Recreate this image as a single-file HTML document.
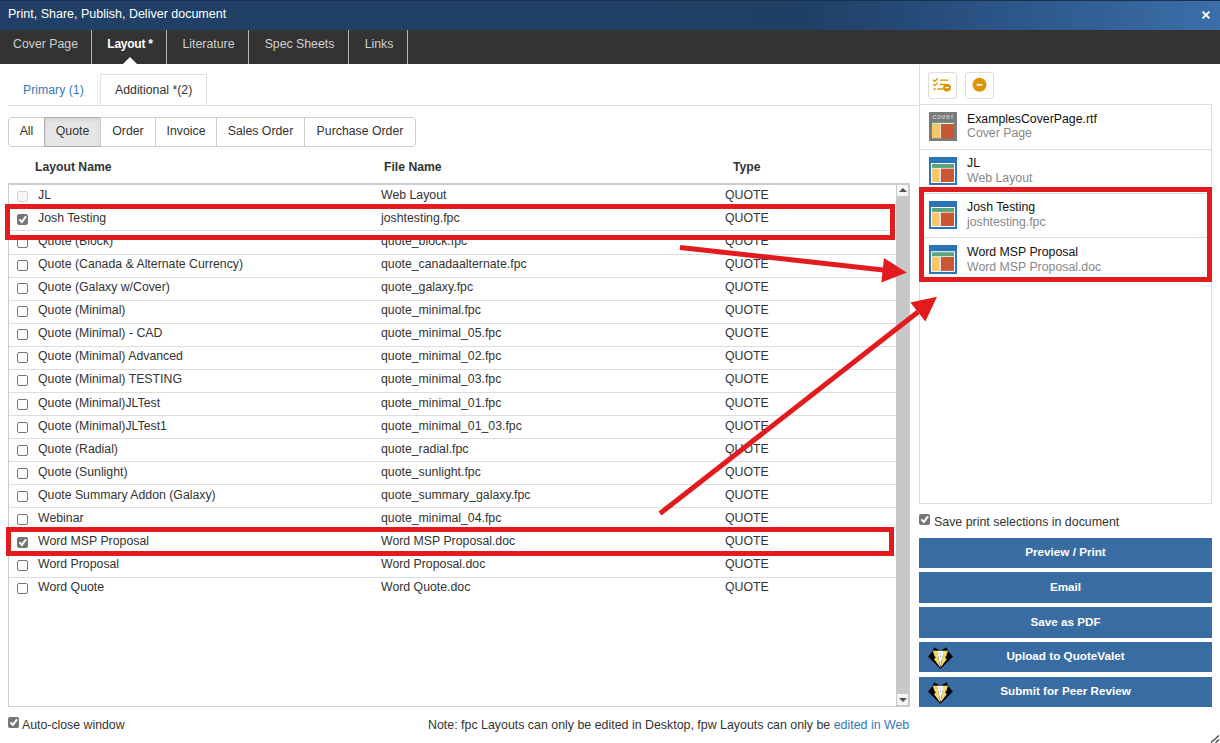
<!DOCTYPE html>
<html><head><meta charset="utf-8">
<style>
*{box-sizing:border-box;margin:0;padding:0}
html,body{width:1220px;height:743px;overflow:hidden;background:#fff;font-family:"Liberation Sans",sans-serif;color:#333;font-size:12.3px}
.a{position:absolute;white-space:nowrap}
#hdr{position:absolute;left:0;top:0;width:1220px;height:30px;background:linear-gradient(to right,#214067 0%,#1f3f65 66%,#2a5283 80%,#3b6fa9 100%);border-top:1px solid #173150}
#hdr .t{position:absolute;left:8px;top:6px;color:#fff;font-size:12.5px}
#tabs{position:absolute;left:0;top:30px;width:1220px;height:34px;background:#333}
.tab{position:absolute;top:0;height:33px;line-height:29px;color:#d0d0d0;font-size:12.3px;text-align:center;padding-left:2px}
.sep{position:absolute;top:0;width:1px;height:34px;background:#b4b4b4}
.notch{position:absolute;left:123px;top:27px;width:0;height:0;border-left:7px solid transparent;border-right:7px solid transparent;border-bottom:7px solid #fff}
.fb{position:absolute;top:117px;height:30px;border:1px solid #ccc;line-height:27px;text-align:center;font-size:12.3px;color:#333;background:#fff}
.row{position:absolute;left:9px;width:887px;height:23px}
.hl{position:absolute;left:9px;width:887px;height:1px;background:#ddd}
.row span{position:absolute;top:3px;font-size:12.3px;color:#333}
.cb{position:absolute;left:8px;top:6px;width:11px;height:11px;border:1px solid #767676;border-radius:2px;background:#fff}
.cbd{border-color:#d3d3d3;background:#f6f6f6}
.cbc{background:#767676;border-color:#767676}
.cbc svg{position:absolute;left:-1px;top:-1px}
.li{position:absolute;left:920px;width:291px;height:45px;border-bottom:1px solid #ddd}
.li .t1{position:absolute;left:47px;top:7px;font-size:12.3px;color:#111}
.li .t2{position:absolute;left:47px;top:22px;font-size:12.3px;color:#888}
.btn{position:absolute;left:919px;width:293px;height:30px;background:#3a6ca4;color:#fff;font-weight:bold;font-size:11.7px;text-align:center;line-height:28px}
.red{position:absolute;border:5px solid #e21b1f}
</style></head>
<body>
<div id="hdr"><div class="t">Print, Share, Publish, Deliver document</div>
<svg class="a" style="left:1200.5px;top:9px" width="10" height="10" viewBox="0 0 10 10"><path d="M1.6 1.6L8.4 8.4M8.4 1.6L1.6 8.4" stroke="#fff" stroke-width="2"/></svg>
</div>
<div id="tabs">
  <div class="tab" style="left:0;width:91px;padding-left:0">Cover Page</div>
  <div class="sep" style="left:91px"></div>
  <div class="tab" style="left:92px;width:74px;color:#fff;font-weight:bold;font-size:12px;letter-spacing:-0.25px;line-height:28px;padding-left:2px">Layout *</div>
  <div class="sep" style="left:166px"></div>
  <div class="tab" style="left:167px;width:81px">Literature</div>
  <div class="sep" style="left:248px"></div>
  <div class="tab" style="left:249px;width:99px">Spec Sheets</div>
  <div class="sep" style="left:348px"></div>
  <div class="tab" style="left:349px;width:58px">Links</div>
  <div class="sep" style="left:407px"></div>
  <div class="notch"></div>
</div>

<!-- sub tabs -->
<div class="a" style="left:23px;top:83px;color:#337ab7;font-size:12.3px">Primary (1)</div>
<div class="a" style="left:97px;top:74px;width:1px;height:31px;background:#eee"></div>
<div class="a" style="left:100px;top:74px;width:107px;height:32px;border:1px solid #ddd;border-bottom:none;background:#fff"></div>
<div class="a" style="left:115px;top:83px;color:#333;font-size:12.3px">Additional *(2)</div>
<div class="a" style="left:8px;top:105px;width:911px;height:1px;background:#ddd"></div>

<!-- filter buttons -->
<div class="fb" style="left:8px;width:37px;border-radius:4px 0 0 4px">All</div>
<div class="fb" style="left:44px;width:57px;background:#e6e6e6;border-color:#adadad;box-shadow:inset 0 2px 4px rgba(0,0,0,.08)">Quote</div>
<div class="fb" style="left:100px;width:56px">Order</div>
<div class="fb" style="left:155px;width:62px">Invoice</div>
<div class="fb" style="left:216px;width:89px">Sales Order</div>
<div class="fb" style="left:304px;width:112px;border-radius:0 4px 4px 0">Purchase Order</div>

<!-- table header -->
<div class="a" style="left:35px;top:160px;font-weight:bold;font-size:12.2px;color:#333">Layout Name</div>
<div class="a" style="left:384px;top:160px;font-weight:bold;font-size:12.2px;color:#333">File Name</div>
<div class="a" style="left:733px;top:160px;font-weight:bold;font-size:12.2px;color:#333">Type</div>

<!-- table box -->
<div class="a" style="left:8px;top:183px;width:902px;height:524px;border:1px solid #ccc;border-top:2px solid #ccc"></div>


<div class="hl" style="top:207px"></div>
<div class="hl" style="top:230px"></div>
<div class="hl" style="top:254px"></div>
<div class="hl" style="top:277px"></div>
<div class="hl" style="top:300px"></div>
<div class="hl" style="top:323px"></div>
<div class="hl" style="top:346px"></div>
<div class="hl" style="top:369px"></div>
<div class="hl" style="top:392px"></div>
<div class="hl" style="top:415px"></div>
<div class="hl" style="top:438px"></div>
<div class="hl" style="top:461px"></div>
<div class="hl" style="top:484px"></div>
<div class="hl" style="top:507px"></div>
<div class="hl" style="top:530px"></div>
<div class="hl" style="top:553px"></div>
<div class="hl" style="top:577px"></div>
<div class="row" style="top:185px"><div class="cb cbd"></div><span style="left:29px">JL</span><span style="left:372px">Web Layout</span><span style="left:716px">QUOTE</span></div>
<div class="row" style="top:208px"><div class="cb cbc"><svg width="11" height="11" viewBox="0 0 11 11"><path d="M2.4 5.4L4.9 7.9L9 2.4" stroke="#fff" stroke-width="2" fill="none"/></svg></div><span style="left:29px">Josh Testing</span><span style="left:372px">joshtesting.fpc</span><span style="left:716px">QUOTE</span></div>
<div class="row" style="top:231px"><div class="cb"></div><span style="left:29px">Quote (Block)</span><span style="left:372px">quote_block.fpc</span><span style="left:716px">QUOTE</span></div>
<div class="row" style="top:254px"><div class="cb"></div><span style="left:29px">Quote (Canada &amp; Alternate Currency)</span><span style="left:372px">quote_canadaalternate.fpc</span><span style="left:716px">QUOTE</span></div>
<div class="row" style="top:277px"><div class="cb"></div><span style="left:29px">Quote (Galaxy w/Cover)</span><span style="left:372px">quote_galaxy.fpc</span><span style="left:716px">QUOTE</span></div>
<div class="row" style="top:300px"><div class="cb"></div><span style="left:29px">Quote (Minimal)</span><span style="left:372px">quote_minimal.fpc</span><span style="left:716px">QUOTE</span></div>
<div class="row" style="top:323px"><div class="cb"></div><span style="left:29px">Quote (Minimal) - CAD</span><span style="left:372px">quote_minimal_05.fpc</span><span style="left:716px">QUOTE</span></div>
<div class="row" style="top:346px"><div class="cb"></div><span style="left:29px">Quote (Minimal) Advanced</span><span style="left:372px">quote_minimal_02.fpc</span><span style="left:716px">QUOTE</span></div>
<div class="row" style="top:369px"><div class="cb"></div><span style="left:29px">Quote (Minimal) TESTING</span><span style="left:372px">quote_minimal_03.fpc</span><span style="left:716px">QUOTE</span></div>
<div class="row" style="top:393px"><div class="cb"></div><span style="left:29px">Quote (Minimal)JLTest</span><span style="left:372px">quote_minimal_01.fpc</span><span style="left:716px">QUOTE</span></div>
<div class="row" style="top:416px"><div class="cb"></div><span style="left:29px">Quote (Minimal)JLTest1</span><span style="left:372px">quote_minimal_01_03.fpc</span><span style="left:716px">QUOTE</span></div>
<div class="row" style="top:439px"><div class="cb"></div><span style="left:29px">Quote (Radial)</span><span style="left:372px">quote_radial.fpc</span><span style="left:716px">QUOTE</span></div>
<div class="row" style="top:462px"><div class="cb"></div><span style="left:29px">Quote (Sunlight)</span><span style="left:372px">quote_sunlight.fpc</span><span style="left:716px">QUOTE</span></div>
<div class="row" style="top:485px"><div class="cb"></div><span style="left:29px">Quote Summary Addon (Galaxy)</span><span style="left:372px">quote_summary_galaxy.fpc</span><span style="left:716px">QUOTE</span></div>
<div class="row" style="top:508px"><div class="cb"></div><span style="left:29px">Webinar</span><span style="left:372px">quote_minimal_04.fpc</span><span style="left:716px">QUOTE</span></div>
<div class="row" style="top:531px"><div class="cb cbc"><svg width="11" height="11" viewBox="0 0 11 11"><path d="M2.4 5.4L4.9 7.9L9 2.4" stroke="#fff" stroke-width="2" fill="none"/></svg></div><span style="left:29px">Word MSP Proposal</span><span style="left:372px">Word MSP Proposal.doc</span><span style="left:716px">QUOTE</span></div>
<div class="row" style="top:554px"><div class="cb"></div><span style="left:29px">Word Proposal</span><span style="left:372px">Word Proposal.doc</span><span style="left:716px">QUOTE</span></div>
<div class="row" style="top:577px"><div class="cb"></div><span style="left:29px">Word Quote</span><span style="left:372px">Word Quote.doc</span><span style="left:716px">QUOTE</span></div>

<!-- scrollbar -->
<div class="a" style="left:896px;top:185px;width:13px;height:521px;background:#c8c8c8"></div>
<div class="a" style="left:897px;top:185px;width:11px;height:11px;background:#f5f5f5"></div>
<div class="a" style="left:899px;top:188px;width:0;height:0;border-left:4px solid transparent;border-right:4px solid transparent;border-bottom:4px solid #505050"></div>
<div class="a" style="left:897px;top:694px;width:11px;height:11px;background:#f5f5f5"></div>
<div class="a" style="left:899px;top:698px;width:0;height:0;border-left:4px solid transparent;border-right:4px solid transparent;border-top:4px solid #505050"></div>

<!-- bottom -->
<div class="a" style="left:8px;top:717px;width:11px;height:11px;background:#767676;border-radius:2px"></div>
<svg class="a" style="left:8px;top:717px" width="11" height="11" viewBox="0 0 11 11"><path d="M2.4 5.4L4.9 7.9L9 2.4" stroke="#fff" stroke-width="2" fill="none"/></svg>
<div class="a" style="left:22px;top:718px;font-size:12.3px;color:#333">Auto-close window</div>
<div class="a" style="left:428px;top:718px;font-size:12.4px;color:#333">Note: fpc Layouts can only be edited in Desktop, fpw Layouts can only be <span style="color:#337ab7">edited in Web</span></div>

<!-- right panel -->
<div class="a" style="left:919px;top:65px;width:1px;height:439px;background:#ddd"></div>
<div class="a" style="left:928px;top:72px;width:29px;height:27px;border:1px solid #ddd;border-radius:3px"></div>
<div class="a" style="left:965px;top:72px;width:29px;height:27px;border:1px solid #ddd;border-radius:3px"></div>
<svg class="a" style="left:928px;top:72px" width="29" height="27" viewBox="0 0 29 27">
<g stroke="#de9300" fill="none" stroke-width="1.3" stroke-linecap="round" stroke-linejoin="round">
<path d="M5.4 8.1L6.8 9.4L9.4 6.7"/><path d="M5.4 12.3L6.8 13.6L9.4 10.9"/>
<path d="M12.4 8.2H19.6"/><path d="M12.4 12.5H16.5"/><path d="M9.8 17H15"/>
</g><circle cx="6.6" cy="17.1" r="1.1" fill="#de9300"/>
<circle cx="19" cy="15.6" r="3.9" fill="#de9300"/><path d="M17.2 15.6H20.8" stroke="#fff" stroke-width="1.2"/></svg>
<svg class="a" style="left:965px;top:72px" width="29" height="27" viewBox="0 0 29 27"><circle cx="14.5" cy="12.8" r="7" fill="#de9300"/><path d="M11.6 12.8H17.4" stroke="#fff" stroke-width="1.8"/></svg>
<div class="a" style="left:920px;top:104px;width:292px;height:400px;border:1px solid #ddd;border-left:none"></div>
<div class="li" style="top:105px;height:45px"><svg class="a" style="left:9px;top:7px" width="28" height="29" viewBox="0 0 28 29"><rect width="28" height="29" fill="#7b7b7b"/><text x="14.3" y="7.4" text-anchor="middle" font-family="Liberation Sans" font-size="7.4" fill="#dcdcdc" letter-spacing="0.7">cover</text><rect x="3" y="10" width="22" height="1.2" fill="#5ba57d"/><rect x="3" y="11.2" width="22" height="1" fill="#fff"/><rect x="3" y="12.2" width="8" height="14" fill="#f8c568"/><rect x="11" y="12.2" width="1" height="14" fill="#f3e3c8"/><rect x="12" y="12.2" width="13" height="14" fill="#c85835"/></svg><div class="t1">ExamplesCoverPage.rtf</div><div class="t2" style="top:21px">Cover Page</div></div>
<div class="li" style="top:149px;height:45px"><svg class="a" style="left:9px;top:8px" width="28" height="28" viewBox="0 0 28 28"><rect width="28" height="28" fill="#2b74b7"/><rect x="2" y="6" width="24" height="20" fill="#fff"/><rect x="3" y="7" width="22" height="3.9" fill="#5ba57d"/><rect x="3" y="11.6" width="7.6" height="13.4" fill="#f8c568"/><rect x="11.8" y="11.6" width="13.2" height="13.4" fill="#c85835"/></svg><div class="t1">JL</div><div class="t2">Web Layout</div></div>
<div class="li" style="top:193px;height:45px"><svg class="a" style="left:9px;top:8px" width="28" height="28" viewBox="0 0 28 28"><rect width="28" height="28" fill="#2b74b7"/><rect x="2" y="6" width="24" height="20" fill="#fff"/><rect x="3" y="7" width="22" height="3.9" fill="#5ba57d"/><rect x="3" y="11.6" width="7.6" height="13.4" fill="#f8c568"/><rect x="11.8" y="11.6" width="13.2" height="13.4" fill="#c85835"/></svg><div class="t1">Josh Testing</div><div class="t2">joshtesting.fpc</div></div>
<div class="li" style="top:237px;height:45px"><svg class="a" style="left:9px;top:8px" width="28" height="29" viewBox="0 0 28 28" preserveAspectRatio="none"><rect width="28" height="28" fill="#2b74b7"/><rect x="2" y="6" width="24" height="20" fill="#fff"/><rect x="3" y="7" width="22" height="3.9" fill="#5ba57d"/><rect x="3" y="11.6" width="7.6" height="13.4" fill="#f8c568"/><rect x="11.8" y="11.6" width="13.2" height="13.4" fill="#c85835"/></svg><div class="t1" style="top:8px">Word MSP Proposal</div><div class="t2" style="top:23px">Word MSP Proposal.doc</div></div>


<div class="a" style="left:919px;top:514px;width:11px;height:11px;background:#767676;border-radius:2px"></div>
<svg class="a" style="left:919px;top:514px" width="11" height="11" viewBox="0 0 11 11"><path d="M2.4 5.4L4.9 7.9L9 2.4" stroke="#fff" stroke-width="2" fill="none"/></svg>
<div class="a" style="left:934px;top:515px;font-size:12.4px;color:#333">Save print selections in document</div>

<div class="btn" style="top:538px">Preview / Print</div>
<div class="btn" style="top:572px;height:31px;line-height:30px">Email</div>
<div class="btn" style="top:607px;height:31px;line-height:29px">Save as PDF</div>
<div class="btn" style="top:642px">Upload to QuoteValet</div>
<div class="btn" style="top:677px">Submit for Peer Review</div>
<svg class="a" style="left:924px;top:644px" width="32" height="28" viewBox="0 0 32 28"><path d="M4 12.6L8.7 7L10 3.2L14.7 5.7L16.4 6.4L18.1 5.7L22.7 3.2L24.1 7L29 12.6L16.4 25Z" fill="#000"/><path d="M8.8 6.8L13.2 6.8L16.4 23.8L10 15.2L11.8 13.2L10.6 12.2Z" fill="#f6d56a"/><path d="M24 6.8L19.6 6.8L16.4 23.8L22.8 15.2L21 13.2L22.2 12.2Z" fill="#f6d56a"/><path d="M13 6.8L19.8 6.8L16.4 22.5Z" fill="#fff"/><circle cx="16.4" cy="9" r="0.7" fill="#999"/><circle cx="16.4" cy="12.2" r="0.7" fill="#999"/></svg>
<svg class="a" style="left:924px;top:679px" width="32" height="28" viewBox="0 0 32 28"><path d="M4 12.6L8.7 7L10 3.2L14.7 5.7L16.4 6.4L18.1 5.7L22.7 3.2L24.1 7L29 12.6L16.4 25Z" fill="#000"/><path d="M8.8 6.8L13.2 6.8L16.4 23.8L10 15.2L11.8 13.2L10.6 12.2Z" fill="#f6d56a"/><path d="M24 6.8L19.6 6.8L16.4 23.8L22.8 15.2L21 13.2L22.2 12.2Z" fill="#f6d56a"/><path d="M13 6.8L19.8 6.8L16.4 22.5Z" fill="#fff"/><circle cx="16.4" cy="9" r="0.7" fill="#999"/><circle cx="16.4" cy="12.2" r="0.7" fill="#999"/></svg>

<!-- red annotations -->
<div class="red" style="left:5px;top:204px;width:890px;height:36px"></div>
<div class="red" style="left:6px;top:527px;width:888px;height:29px"></div>
<div class="red" style="left:919px;top:187px;width:293px;height:95px"></div>
<svg class="a" style="left:0;top:0" width="1220" height="743" viewBox="0 0 1220 743">
<path d="M680 247.4L890 270.8" stroke="#e21b1f" stroke-width="5"/>
<path d="M906.8 272.6L884 258L881.3 282.4Z" fill="#e21b1f"/>
<path d="M660 513.5L918 312" stroke="#e21b1f" stroke-width="5"/>
<path d="M937 296.8L910.4 302.4L925.4 321.6Z" fill="#e21b1f"/>
<path d="M1211 742.5L1219 735.5M1215.5 742.5L1219 739.6" stroke="#505050" stroke-width="1.5"/>
</svg>
</body></html>
